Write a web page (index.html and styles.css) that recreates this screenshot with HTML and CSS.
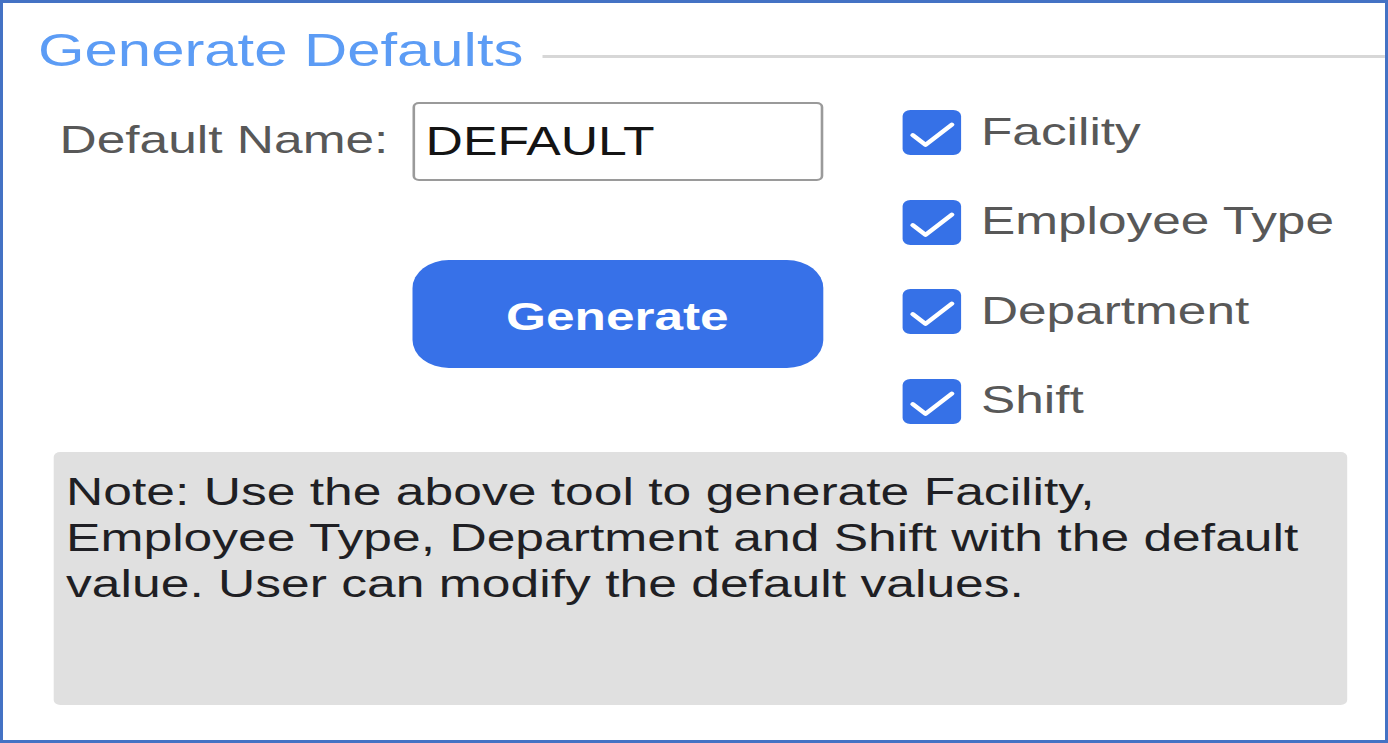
FILE: index.html
```html
<!DOCTYPE html>
<html lang="en">
<head>
<meta charset="utf-8">
<title>Generate Defaults</title>
<link rel="stylesheet" href="styles.css">
</head>
<body>
<div class="frame">
  <div class="canvas">
    <div class="title-row">
      <h1 class="title">Generate Defaults</h1>
      <div class="title-rule"></div>
    </div>
    <div class="top">
      <div class="form-grid">
        <label class="field-label">Default Name:</label>
        <div class="text-input">DEFAULT</div>
        <button class="btn-generate" type="button">Generate</button>
      </div>
      <div class="checks">
        <div class="check-row">
          <span class="check-box"><svg viewBox="0 0 24 24"><path d="M4.2 13.4 L9.4 18.6 L20.2 7.8"/></svg></span>
          <span class="check-label">Facility</span>
        </div>
        <div class="check-row">
          <span class="check-box"><svg viewBox="0 0 24 24"><path d="M4.2 13.4 L9.4 18.6 L20.2 7.8"/></svg></span>
          <span class="check-label">Employee Type</span>
        </div>
        <div class="check-row">
          <span class="check-box"><svg viewBox="0 0 24 24"><path d="M4.2 13.4 L9.4 18.6 L20.2 7.8"/></svg></span>
          <span class="check-label">Department</span>
        </div>
        <div class="check-row">
          <span class="check-box"><svg viewBox="0 0 24 24"><path d="M4.2 13.4 L9.4 18.6 L20.2 7.8"/></svg></span>
          <span class="check-label">Shift</span>
        </div>
      </div>
    </div>
    <div class="note">Note: Use the above tool to generate Facility, Employee Type, Department and Shift with the default value. User can modify the default values.</div>
  </div>
</div>
</body>
</html>
```
FILE: styles.css
```css
* {
  box-sizing: border-box;
}

html, body {
  margin: 0;
  padding: 0;
  background: #ffffff;
}

body {
  font-family: "Liberation Sans", Arial, sans-serif;
}

.frame {
  width: 1388px;
  height: 743px;
  border: 3px solid #4472c4;
  overflow: hidden;
  background: #ffffff;
}

/* the reference is horizontally stretched; lay out in natural units and stretch */
.canvas {
  width: 1063px;
  padding-top: 21px;
  transform: scaleX(1.3);
  transform-origin: 0 0;
}

.title-row {
  display: flex;
  align-items: flex-start;
  padding-left: 27px;
}

.title {
  margin: 0;
  font-size: 46px;
  line-height: 52px;
  font-weight: normal;
  color: #5c9cf5;
  white-space: nowrap;
}

.title-rule {
  flex: 1;
  height: 3px;
  margin-top: 31px;
  margin-left: 15px;
  background: #d7d7d7;
}

.top {
  display: flex;
  align-items: flex-start;
  padding-left: 43.5px;
}

.form-grid {
  display: grid;
  grid-template-columns: 247.5px 316px;
  column-gap: 23.6px;
  row-gap: 79px;
  align-items: center;
  margin-top: 26px;
}

.field-label {
  font-size: 39.6px;
  color: #585858;
  white-space: nowrap;
  margin-top: -5px;
}

.text-input {
  height: 79px;
  border: 2px solid #9a9a9a;
  border-radius: 5px;
  padding-left: 8.5px;
  display: flex;
  align-items: center;
  font-size: 39.8px;
  color: #141414;
}

.btn-generate {
  grid-column: 2;
  height: 108px;
  border: none;
  border-radius: 28px;
  background: #3771e8;
  color: #ffffff;
  font-family: "Liberation Sans", Arial, sans-serif;
  font-size: 39.5px;
  font-weight: bold;
  padding: 5px 0 0 0;
}

.checks {
  display: flex;
  flex-direction: column;
  gap: 44.5px;
  margin-top: 34px;
  margin-left: 61.7px;
}

.check-row {
  display: flex;
  align-items: center;
  height: 45px;
  gap: 15px;
}

.check-box {
  width: 45px;
  height: 45px;
  border-radius: 6px;
  background: #3671e7;
  display: flex;
  flex: none;
}

.check-box svg {
  width: 45px;
  height: 45px;
}

.check-box path {
  fill: none;
  stroke: #ffffff;
  stroke-width: 2.1;
  stroke-linecap: round;
  stroke-linejoin: round;
}

.check-label {
  font-size: 39.5px;
  color: #585858;
  white-space: nowrap;
  margin-top: -3px;
}

.note {
  margin-top: 28.5px;
  margin-left: 39px;
  width: 995px;
  height: 253px;
  background: #e0e0e0;
  border-radius: 5px;
  padding: 16px 24px 0 9.5px;
  font-size: 39.7px;
  line-height: 46px;
  color: #1f1f24;
}
```
